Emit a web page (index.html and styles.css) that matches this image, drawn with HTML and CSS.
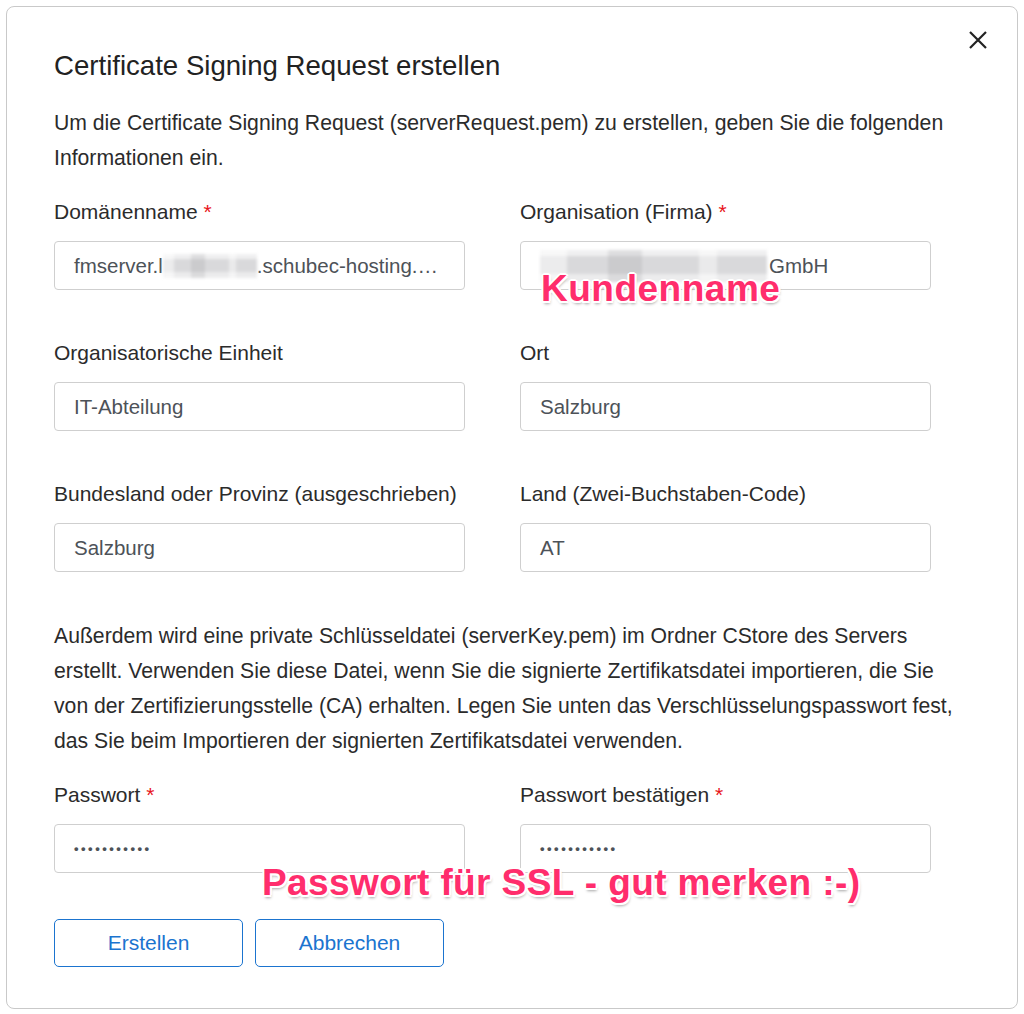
FILE: index.html
```
<!DOCTYPE html>
<html lang="de">
<head>
    <meta charset="UTF-8">
    <meta name="viewport" content="width=device-width, initial-scale=1.0">
    <title>Certificate Signing Request erstellen</title>
    <link rel="stylesheet" href="styles.css">
</head>
<body>
    <div class="modal">
        <button class="close-button" aria-label="Schließen">
            <svg width="18" height="18" viewBox="0 0 18 18">
                <path d="M1 1 L17 17 M17 1 L1 17" stroke="#222" stroke-width="2.2" stroke-linecap="butt" fill="none"/>
            </svg>
        </button>

        <h1>Certificate Signing Request erstellen</h1>
        <p class="intro">Um die Certificate Signing Request (serverRequest.pem) zu erstellen, geben Sie die folgenden Informationen ein.</p>

        <div class="form-grid">
            <div class="field">
                <label>Domänenname <span class="required">*</span></label>
                <div class="input">fmserver.l<span class="blur blur-domain"></span>.schubec-hosting.…</div>
            </div>
            <div class="field">
                <label>Organisation (Firma) <span class="required">*</span></label>
                <div class="input"><span class="blur blur-org"></span>GmbH</div>
            </div>
            <div class="field">
                <label>Organisatorische Einheit</label>
                <div class="input">IT-Abteilung</div>
            </div>
            <div class="field">
                <label>Ort</label>
                <div class="input">Salzburg</div>
            </div>
            <div class="field">
                <label>Bundesland oder Provinz (ausgeschrieben)</label>
                <div class="input">Salzburg</div>
            </div>
            <div class="field">
                <label>Land (Zwei-Buchstaben-Code)</label>
                <div class="input">AT</div>
            </div>
        </div>

        <p class="note">Außerdem wird eine private Schlüsseldatei (serverKey.pem) im Ordner CStore des Servers erstellt. Verwenden Sie diese Datei, wenn Sie die signierte Zertifikatsdatei importieren, die Sie von der Zertifizierungsstelle (CA) erhalten. Legen Sie unten das Verschlüsselungspasswort fest, das Sie beim Importieren der signierten Zertifikatsdatei verwenden.</p>

        <div class="form-grid">
            <div class="field">
                <label>Passwort <span class="required">*</span></label>
                <div class="input password">•••••••••••</div>
            </div>
            <div class="field">
                <label>Passwort bestätigen <span class="required">*</span></label>
                <div class="input password">•••••••••••</div>
            </div>
        </div>

        <div class="actions">
            <button class="btn">Erstellen</button>
            <button class="btn">Abbrechen</button>
        </div>

        <!-- annotations drawn over the screenshot -->
        <div class="annotation note-customer">Kundenname</div>
        <div class="annotation note-password">Passwort für SSL - gut merken :-)</div>
    </div>
</body>
</html>
```

FILE: styles.css
```
body {
    font-family: "Liberation Sans", Arial, sans-serif;
    background-color: white;
    color: #2b2b2b;
    margin: 0;
    padding: 0;
}
.modal {
    position: relative;
    margin: 6px;
    height: 1003px;
    box-sizing: border-box;
    border: 1px solid #c9c9c9;
    border-radius: 8px;
    padding: 42px 47px 40px 47px;
    background-color: white;
}
.close-button {
    position: absolute;
    top: 24px;
    right: 30px;
    background: none;
    border: none;
    padding: 0;
    cursor: pointer;
}
h1 {
    font-size: 27.6px;
    font-weight: normal;
    line-height: 34px;
    color: #222;
    margin: 0;
}
.intro,
.note {
    font-size: 21.2px;
    margin: 0;
}
.intro {
    line-height: 35px;
    margin-top: 21.5px;
    margin-bottom: 25.5px;
}
.note {
    line-height: 35.33px;
    margin-top: 45.5px;
    margin-bottom: 24.5px;
    width: 910px;
}
.form-grid {
    display: grid;
    grid-template-columns: 411px 411px;
    column-gap: 55px;
    row-gap: 51px;
}
.field label {
    display: block;
    font-size: 21px;
    line-height: 24px;
    margin-bottom: 17px;
}
.required {
    color: #e8141b;
}
.input {
    height: 49px;
    box-sizing: border-box;
    border: 1px solid #cfcfcf;
    border-radius: 4px;
    padding: 0 19px;
    display: flex;
    align-items: center;
    font-size: 20.5px;
    color: #4d5258;
    white-space: nowrap;
    overflow: hidden;
}
.input.password {
    font-size: 13px;
    letter-spacing: 2.5px;
    font-weight: bold;
}
.blur {
    display: inline-block;
    background-color: #d9d9db;
    background-image:
        linear-gradient(90deg, rgba(255,255,255,0.5) 0 12%, transparent 12% 30%, rgba(120,120,125,0.15) 30% 45%, transparent 45% 70%, rgba(255,255,255,0.45) 70% 78%, transparent 78%),
        linear-gradient(180deg, rgba(255,255,255,0.6) 0 20%, transparent 20% 75%, rgba(255,255,255,0.5) 75%);
    filter: blur(1.5px);
}
.blur-domain {
    width: 94px;
    height: 24px;
}
.blur-org {
    width: 227px;
    height: 32px;
    margin-right: 2px;
}
.actions {
    display: flex;
    gap: 12px;
    margin-top: 46px;
}
.btn {
    width: 189px;
    height: 48px;
    background-color: white;
    border: 1px solid #1b74cf;
    border-radius: 5px;
    color: #1b74cf;
    font-family: "Liberation Sans", Arial, sans-serif;
    font-size: 21px;
    cursor: pointer;
}
.annotation {
    position: absolute;
    font-weight: bold;
    font-size: 37px;
    line-height: 37px;
    color: #ff2d6c;
    white-space: nowrap;
    text-shadow:
        -2px 0 0 #fff, 2px 0 0 #fff, 0 -2px 0 #fff, 0 2px 0 #fff,
        -1.5px -1.5px 0 #fff, 1.5px -1.5px 0 #fff, -1.5px 1.5px 0 #fff, 1.5px 1.5px 0 #fff,
        1px 3px 3px rgba(0,0,0,0.35);
}
.note-customer {
    letter-spacing: 0.5px;
    top: 263px;
    left: 534px;
}
.note-password {
    letter-spacing: 0.4px;
    top: 857px;
    left: 255px;
}
```
